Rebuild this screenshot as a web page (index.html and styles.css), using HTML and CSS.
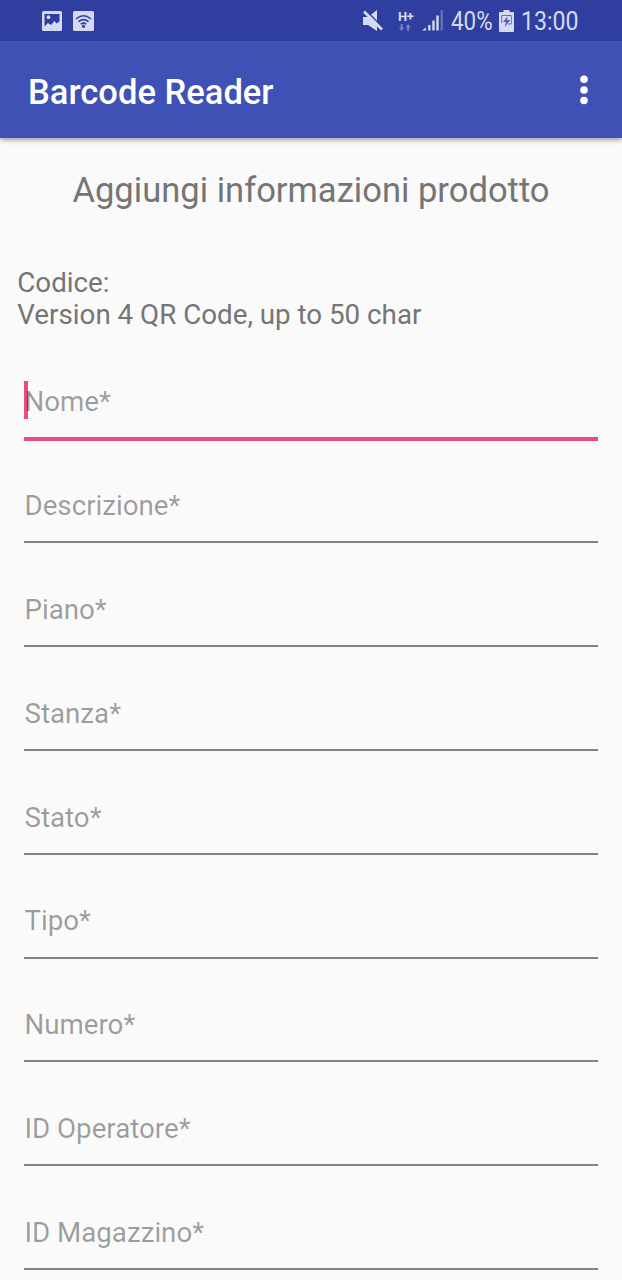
FILE: index.html
```html
<!DOCTYPE html>
<html lang="it">
<head>
<meta charset="utf-8">
<title>Barcode Reader</title>
<link rel="stylesheet" href="styles.css">
</head>
<body>
<header class="status">
  <div class="status-left">
    <svg width="20" height="20" viewBox="0 0 20 20"><path fill="#d5daf2" fill-rule="evenodd" d="M1.500 0h17Q20 0 20 1.500v17Q20 20 18.500 20h-17Q0 20 0 18.500v-17Q0 0 1.500 0zM2.500 3v12.500l3.500-3.500 3 2 3.500-4 2 2.500 3-2V3zM6.500 4.300a1.900 1.900 0 1 1 0 3.800 1.900 1.900 0 0 1 0-3.800z"/></svg>
    <svg width="21" height="20" viewBox="0 0 21 20"><rect width="21" height="20" rx="1.500" fill="#d5daf2"/><g fill="none" stroke="#3341a0" stroke-width="1.600"><path d="M3 8Q10.500 1.500 18 8M5.500 10.700Q10.500 6.400 15.500 10.700M7.800 13.200Q10.500 11 13.200 13.200"/></g><circle cx="10.500" cy="15.300" r="1.600" fill="#3341a0"/></svg>
  </div>
  <div class="status-right">
    <svg class="mute" width="20" height="22" viewBox="0 0 20 22"><path fill="#d5daf2" d="M0 7h5L14 0v21L5 15H0z"/><path d="M3 0.500L22 19.500" stroke="#303f9f" stroke-width="1.500"/><path d="M1 1.500L19 19.500" stroke="#d5daf2" stroke-width="2.600"/></svg>
    <div class="network"><span class="network-type">H+</span>
      <svg width="12" height="7" viewBox="0 0 12 7"><path fill="#7984c6" d="M1.700 0h1.800v3.500h1.700L2.600 7 0 3.500h1.700zM8.200 7H10V3.500h1.700L9.100 0 6.500 3.500h1.700z"/></svg></div>
    <svg class="signal" width="21" height="21" viewBox="0 0 21 21"><path fill="#d5daf2" d="M0 20.500l4-3v3zM6.200 15h2.300v5.500H6.200zM10.300 10.500h2.400v10h-2.400zM14.300 5.500h2.400v15h-2.400z"/><path fill="#6975bf" d="M18.700 0h2.100v20.500h-2.100z"/></svg>
    <span class="percent">40%</span>
    <svg class="battery" width="15" height="22" viewBox="0 0 15 22"><path fill="#d5daf2" d="M4.500 0h6v2H14q1 0 1 1v18q0 1-1 1H1q-1 0-1-1V3q0-1 1-1h3.500z"/><path d="M2.700 13V5.500h9.600V14H9" fill="none" stroke="#6571b8" stroke-width="1"/><path fill="#5360b0" d="M8.800 6L4 12h3L5.800 17l5.300-7H8z"/></svg>
    <span class="clock">13:00</span>
  </div>
</header>
<div class="appbar">
  <h1 class="appbar-title">Barcode Reader</h1>
  <svg class="more" width="8" height="30" viewBox="0 0 8 30"><g fill="#fff"><circle cx="4" cy="4.300" r="3.800"/><circle cx="4" cy="15" r="3.800"/><circle cx="4" cy="25.500" r="3.800"/></g></svg>
</div>
<main class="content">
  <h2 class="heading">Aggiungi informazioni prodotto</h2>
  <p class="code">Codice:<br>Version 4 QR Code, up to 50 char</p>
  <form class="fields">
    <div class="field focused"><span class="hint">Nome*</span></div>
    <div class="field"><span class="hint">Descrizione*</span></div>
    <div class="field"><span class="hint">Piano*</span></div>
    <div class="field"><span class="hint">Stanza*</span></div>
    <div class="field"><span class="hint">Stato*</span></div>
    <div class="field"><span class="hint">Tipo*</span></div>
    <div class="field"><span class="hint">Numero*</span></div>
    <div class="field"><span class="hint">ID Operatore*</span></div>
    <div class="field"><span class="hint">ID Magazzino*</span></div>
  </form>
</main>
</body>
</html>
```
FILE: styles.css
```css
* { box-sizing: border-box; }
body {
  margin: 0;
  height: 1280px;
  overflow: hidden;
  background: #fafafa;
  color: #757575;
  font-family: Roboto, sans-serif;
}
svg { display: block; flex: none; }
.status {
  display: flex;
  justify-content: space-between;
  height: 41px;
  padding: 0 44px 0 42px;
  background: #303f9f;
}
.status-left { display: flex; align-items: center; gap: 11px; }
.status-right { display: flex; align-items: center; color: #d5daf2; font-size: 26px; line-height: 44px; }
.mute { margin-right: 15px; }
.network { width: 15px; height: 20px; margin-right: 9px; }
.network-type { display: block; height: 13px; font-size: 13px; font-weight: 700; line-height: 12px; letter-spacing: -0.500px; }
.network svg { margin-left: 1px; }
.signal { margin-right: 8px; }
.percent { width: 41px; margin-right: 7px; padding-top: 1px; white-space: nowrap; transform: scaleX(.86); transform-origin: left; }
.battery { margin-right: 7px; }
.clock { width: 57px; padding-top: 1px; white-space: nowrap; transform: scaleX(.89); transform-origin: left; }
.appbar {
  position: relative;
  display: flex;
  align-items: center;
  justify-content: space-between;
  height: 97px;
  padding: 0 34px 0 28px;
  background: #3f51b5;
  box-shadow: 0 2px 5px rgba(0, 0, 0, .38);
}
.appbar-title { margin: 5px 0 0; color: #fff; font-size: 34.550px; font-weight: 500; line-height: 40px; }
.content { padding-top: 32px; }
.heading { margin: 0; text-align: center; font-size: 34.550px; font-weight: 400; line-height: 40px; }
.code { margin: 57px 0 0 17.300px; font-size: 27.750px; line-height: 32.300px; }
.fields { padding: 5.600px 24px 0; }
.field {
  display: flex;
  align-items: flex-end;
  height: 103.800px;
  padding-bottom: 18.200px;
  border-bottom: 2px solid #828282;
}
.hint { height: 38px; padding-left: .500px; color: rgba(0, 0, 0, .38); font-size: 27.700px; line-height: 42px; }
.focused { padding-bottom: 18px; border-bottom: 4px solid #ed4a83; }
.focused .hint { box-shadow: inset 4px 0 #ed4a83; }
.focused + .field { height: 102.500px; }
```
